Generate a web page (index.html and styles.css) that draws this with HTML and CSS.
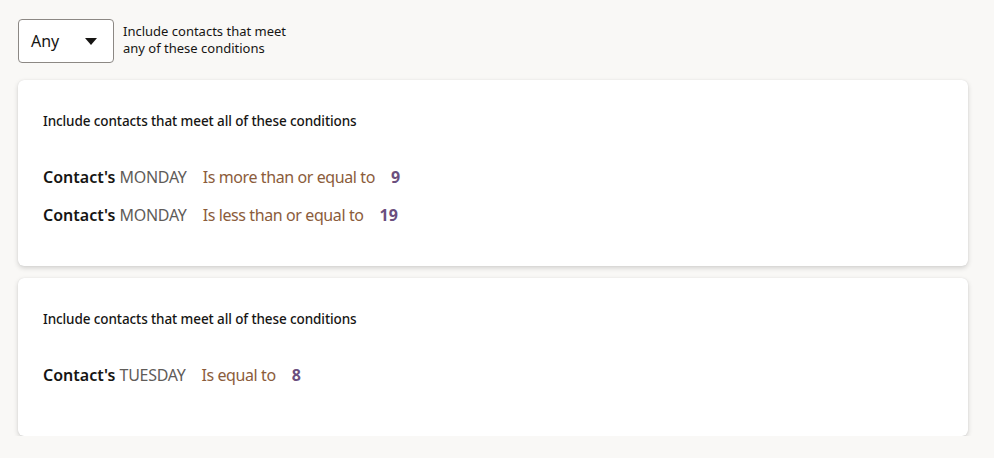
FILE: index.html
```html
<!DOCTYPE html>
<html lang="en">
<head>
<meta charset="utf-8">
<title>Conditions</title>
<link rel="stylesheet" href="styles.css">
</head>
<body>
<div class="page">
  <div class="top">
    <div class="select">
      <span class="select-value">Any</span>
      <svg class="caret" width="12" height="7" viewBox="0 0 12 7"><path d="M0 0h12L6 7z" fill="#161513"/></svg>
    </div>
    <div class="hint">Include contacts that meet<br>any of these conditions</div>
  </div>
  <div class="cards">
    <div class="card">
      <div class="card-title">Include contacts that meet all of these conditions</div>
      <div class="rows">
        <div class="row"><span class="subj">Contact's</span> <span class="field">MONDAY</span><span class="op">Is more than or equal to</span><span class="val">9</span></div>
        <div class="row"><span class="subj">Contact's</span> <span class="field">MONDAY</span><span class="op">Is less than or equal to</span><span class="val">19</span></div>
      </div>
    </div>
    <div class="card">
      <div class="card-title">Include contacts that meet all of these conditions</div>
      <div class="rows">
        <div class="row"><span class="subj">Contact's</span> <span class="field">TUESDAY</span><span class="op">Is equal to</span><span class="val">8</span></div>
      </div>
    </div>
  </div>
</div>
</body>
</html>
```
FILE: styles.css
```css
html, body {
  margin: 0;
  padding: 0;
}
body {
  background: #f9f8f6;
  font-family: "Noto Sans", "Open Sans", sans-serif;
  color: #161513;
}
.page {
  padding: 19px 26px 0 18px;
}
.top {
  display: flex;
  align-items: center;
  gap: 9px;
}
.select {
  box-sizing: border-box;
  width: 96px;
  height: 44px;
  border: 1px solid #8c8884;
  border-radius: 4px;
  background: #fff;
  display: flex;
  align-items: center;
  justify-content: space-between;
  padding: 0 16px 0 12px;
}
.select-value {
  font-size: 16px;
  color: #161513;
}
.caret {
  display: block;
  margin-top: 1px;
}
.hint {
  font-size: 13px;
  line-height: 17px;
  color: #161513;
  margin-top: -3px;
}
.cards {
  margin-top: 17px;
  display: flex;
  flex-direction: column;
  gap: 12px;
}
.card {
  box-sizing: border-box;
  min-height: 158px;
  background: #fff;
  border-radius: 6px;
  box-shadow: 0 2px 5px rgba(0, 0, 0, 0.16), 0 0 1px rgba(0, 0, 0, 0.12);
  padding: 32px 25px 40px 25px;
}
.card-title {
  font-size: 13.5px;
  line-height: 18px;
  font-weight: 500;
  letter-spacing: -0.1px;
  color: #161513;
}
.rows {
  margin-top: 36px;
  display: flex;
  flex-direction: column;
  gap: 16px;
}
.row {
  font-size: 16px;
  line-height: 22px;
  white-space: nowrap;
}
.subj {
  font-weight: 600;
  color: #161513;
}
.field {
  color: #5f5c59;
  letter-spacing: -0.3px;
}
.op {
  color: #8b5c3b;
  margin-left: 16px;
  letter-spacing: -0.4px;
}
.val {
  color: #6b4f7e;
  font-weight: 700;
  margin-left: 16px;
}
```
